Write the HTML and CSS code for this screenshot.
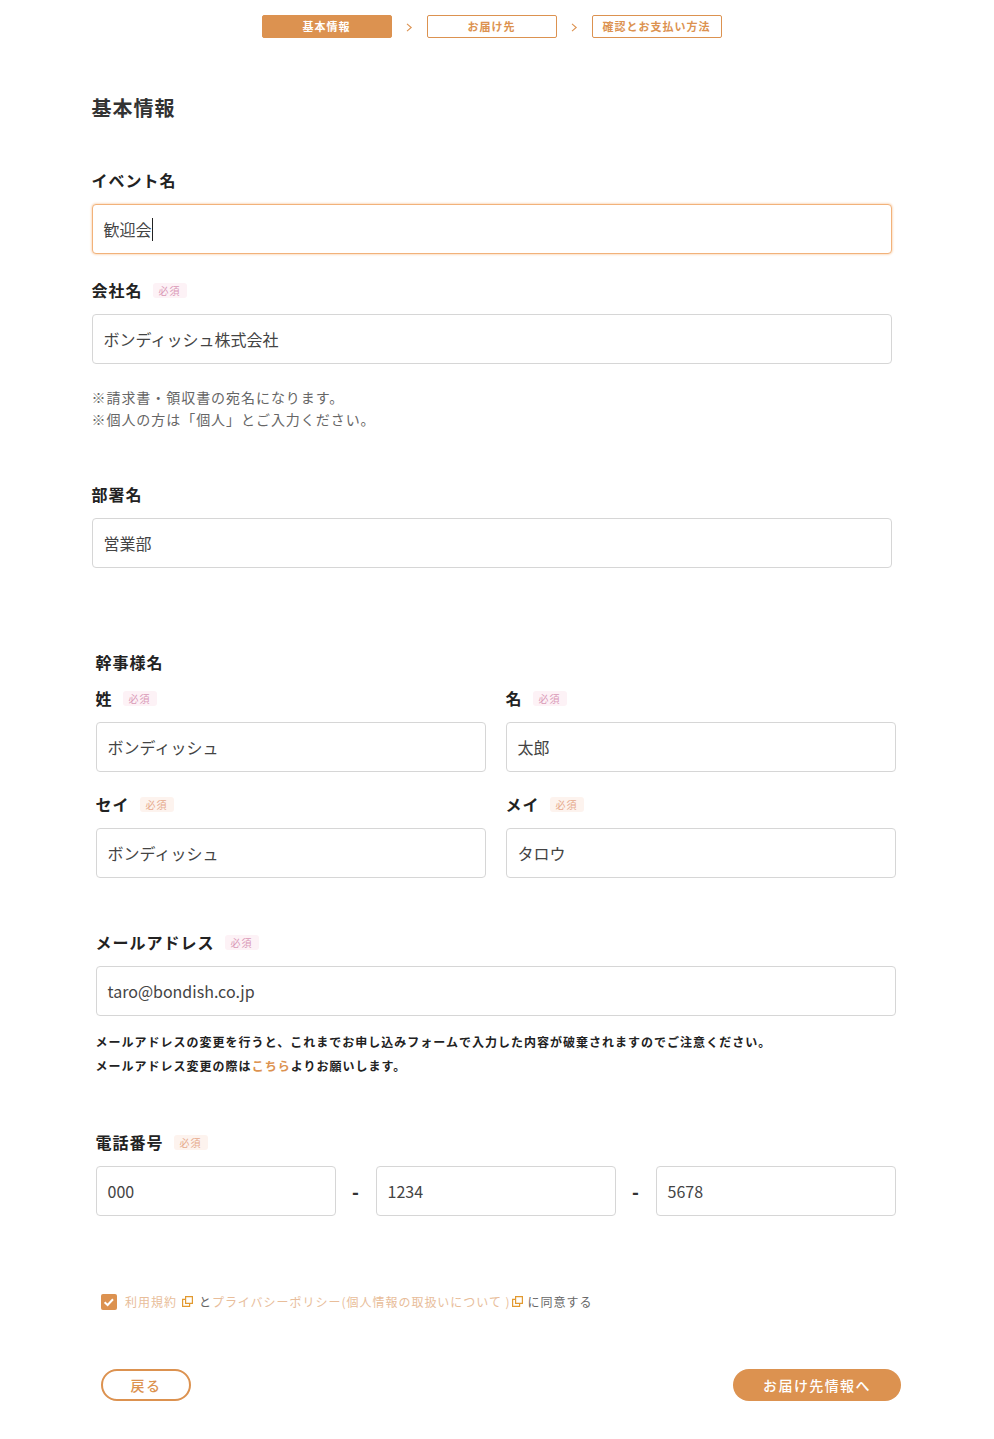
FILE: index.html
```html
<!DOCTYPE html>
<html lang="ja">
<head>
<meta charset="utf-8">
<title>基本情報</title>
<link rel="stylesheet" href="styles.css">
</head>
<body>
<div class="page">
  <nav class="steps">
    <div class="step step-on">基本情報</div>
    <svg class="chev" width="7" height="9" viewBox="0 0 7 9"><path d="M1 .8 5.2 4.5 1 8.2" fill="none" stroke="#dc9250" stroke-width="1.1"/></svg>
    <div class="step">お届け先</div>
    <svg class="chev" width="7" height="9" viewBox="0 0 7 9"><path d="M1 .8 5.2 4.5 1 8.2" fill="none" stroke="#dc9250" stroke-width="1.1"/></svg>
    <div class="step">確認とお支払い方法</div>
  </nav>

  <section class="basic">
    <h1 class="title">基本情報</h1>
    <div class="label l-event"><span>イベント名</span></div>
    <div class="input focus"><span>歓迎会</span><i class="caret"></i></div>
    <div class="label l-company"><span>会社名</span><em class="req r-pink">必須</em></div>
    <div class="input">ボンディッシュ株式会社</div>
    <p class="note">※請求書・領収書の宛名になります。<br>※個人の方は「個人」とご入力ください。</p>
    <div class="label l-dept"><span>部署名</span></div>
    <div class="input">営業部</div>
  </section>

  <section class="contact">
    <div class="label l-kanji"><span>幹事様名</span></div>
    <div class="cols">
      <div class="col">
        <div class="label l-sub"><span>姓</span><em class="req r-pink">必須</em></div>
        <div class="input">ボンディッシュ</div>
      </div>
      <div class="col">
        <div class="label l-sub"><span>名</span><em class="req r-pink">必須</em></div>
        <div class="input">太郎</div>
      </div>
      <div class="col">
        <div class="label l-sub"><span>セイ</span><em class="req r-peach">必須</em></div>
        <div class="input">ボンディッシュ</div>
      </div>
      <div class="col">
        <div class="label l-sub"><span>メイ</span><em class="req r-peach">必須</em></div>
        <div class="input">タロウ</div>
      </div>
    </div>
    <div class="label l-mail"><span>メールアドレス</span><em class="req r-pink">必須</em></div>
    <div class="input">taro@bondish.co.jp</div>
    <p class="warn">メールアドレスの変更を行うと、これまでお申し込みフォームで入力した内容が破棄されますのでご注意ください。<br>メールアドレス変更の際は<a class="link">こちら</a>よりお願いします。</p>
    <div class="label l-tel"><span>電話番号</span><em class="req r-peach">必須</em></div>
    <div class="tel">
      <div class="input">000</div>
      <span class="dash">-</span>
      <div class="input">1234</div>
      <span class="dash">-</span>
      <div class="input">5678</div>
    </div>
  </section>

  <section class="foot">
    <div class="agree">
      <span class="check"><svg width="16" height="16" viewBox="0 0 16 16"><path d="M3.6 8.2 6.6 11 12 5.2" fill="none" stroke="#fff" stroke-width="2"/></svg></span>
      <a class="terms">利用規約</a>
      <svg class="ext" width="11" height="11" viewBox="0 0 11 11"><path d="M3.6.6h6.8v6.8H3.6z M3.6 3.4H.6v7h7V7.4" fill="none" stroke="#e29a30" stroke-width="1.2"/></svg>
      <span class="and">と</span><a class="terms">プライバシーポリシー(個人情報の取扱いについて )</a>
      <svg class="ext ext-b" width="11" height="11" viewBox="0 0 11 11"><path d="M3.6.6h6.8v6.8H3.6z M3.6 3.4H.6v7h7V7.4" fill="none" stroke="#e29a30" stroke-width="1.2"/></svg>
      <span class="and">に同意する</span>
    </div>
    <div class="btns">
      <a class="btn btn-back">戻る</a>
      <a class="btn btn-next">お届け先情報へ</a>
    </div>
  </section>
</div>
</body>
</html>
```
FILE: styles.css
```css
* { box-sizing: border-box; }
html, body { margin: 0; padding: 0; background: #fff; }
body {
  font-family: "Noto Sans CJK JP", "Noto Sans", sans-serif;
  color: #333;
  width: 994px;
  height: 1439px;
  overflow: hidden;
}
.page { position: relative; padding-top: 15px; }

.steps { display: flex; justify-content: center; align-items: center; width: 983px; }
.step {
  width: 130px; height: 23px;
  border: 1px solid #dc9250; border-radius: 2px;
  color: #dc9250; font-size: 11px; font-weight: 700; letter-spacing: 1px;
  display: flex; align-items: center; justify-content: center;
  line-height: 1;
}
.step-on { background: #dc9250; color: #fff; }
.chev { margin: 1px 14px 0 14px; }

.basic { margin: 0 0 0 91.5px; width: 800px; padding-top: 55px; }
.title { margin: 0; font-size: 20px; font-weight: 700; letter-spacing: 1px; line-height: 30px; color: #333; }

.label {
  display: flex; align-items: center;
  font-size: 16px; font-weight: 700; line-height: 24px; color: #222; letter-spacing: 1px;
}
.req {
  font-style: normal; font-weight: 400; font-size: 10px; line-height: 15px; height: 15px;
  border-radius: 3px; padding: 0 6px; letter-spacing: 1px;
  margin-left: 10px;
}
.r-pink { background: #fdf2f6; color: #d998b6; }
.r-peach { background: #fdf3ee; color: #e6a98c; }

.input {
  height: 50px; width: 100%;
  border: 1px solid #d6d6d6; border-radius: 4px;
  padding: 0 11px;
  display: flex; align-items: center;
  font-size: 16px; color: #444; line-height: 24px; background: #fff;
}
.focus { border-color: #f2b27a; box-shadow: 0 0 2px 1px #fbe0c8; }
.caret { display: inline-block; width: 1px; height: 23px; background: #222; margin-left: 0; }

.l-event { margin-top: 45px; margin-bottom: 12px; }
.l-company { margin-top: 24px; margin-bottom: 12px; }
.note { margin: 21.5px 0 0; font-size: 14px; line-height: 22px; color: #666; letter-spacing: .95px; }
.l-dept { margin-top: 52.5px; margin-bottom: 12px; }

.contact { margin: 0 0 0 95.5px; width: 800px; }
.l-kanji { margin-top: 82px; margin-bottom: 12px; }
.cols { display: grid; grid-template-columns: 390px 390px; column-gap: 20px; }
.l-sub { margin-bottom: 12px; height: 24px; }
.col:nth-child(n+3) { margin-top: 20px; }
.l-mail { margin-top: 52px; margin-bottom: 12px; }
.warn { margin: 14px 0 0; font-size: 12px; font-weight: 700; line-height: 24px; color: #222; letter-spacing: 1.01px; }
.link { color: #dc9250; font-weight: 700; }
.l-tel { margin-top: 52px; margin-bottom: 12px; }
.tel { display: flex; align-items: center; }
.tel .input { width: 240px; flex: none; }
.dash { width: 40px; text-align: center; font-weight: 900; font-size: 18px; color: #333; }

.foot { margin: 0 0 0 101px; width: 800px; }
.agree { margin-top: 75px; height: 21px; display: flex; align-items: center; font-size: 12px; letter-spacing: .98px; color: #666; white-space: nowrap; }
.check { width: 16px; height: 16px; border-radius: 2px; background: #dc9250; margin-right: 8px; display: block; flex: none; }
.check svg { display: block; }
.terms { color: #e8bd9a; }
.ext { margin: 0 6px 0 5px; flex: none; }
.ext-b { margin: 0 5px 0 1px; }
.and { color: #666; }
.btns { display: flex; justify-content: space-between; margin-top: 57px; }
.btn {
  height: 32px; border-radius: 16px; display: flex; align-items: center; justify-content: center;
  font-size: 14px; font-weight: 500; letter-spacing: 1.4px; line-height: 1;
}
.btn-back { width: 90px; border: 2px solid #dc9250; color: #dc9250; }
.btn-next { width: 168px; background: #dc9250; color: #fff; }
```
